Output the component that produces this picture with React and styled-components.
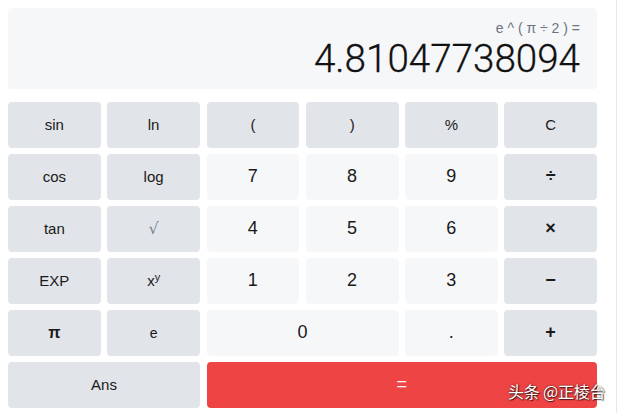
import styled, { createGlobalStyle } from "styled-components";

const GlobalStyle = createGlobalStyle`
  html, body {
    margin: 0;
    padding: 0;
    background: #fff;
  }
  body {
    font-family: "Liberation Sans", Arial, sans-serif;
  }
`;

const Page = styled.div`
  display: flex;
  width: 621px;
  height: 413px;
  position: relative;
  overflow: hidden;
`;
const Main = styled.div`
  width: 616px;
  padding: 8px 0 0 8px;
  box-sizing: border-box;
`;
const Rail = styled.div`
  flex: 1;
  border-left: 1px solid #e8e9eb;
`;
const Display = styled.div`
  width: 589px;
  height: 81px;
  box-sizing: border-box;
  background: #f6f7f9;
  border-radius: 4px;
  padding: 12px 17px 0 0;
  display: flex;
  flex-direction: column;
  align-items: flex-end;
`;
const Expr = styled.div`
  font-size: 14px;
  color: #6b7280;
  line-height: 16px;
  height: 16px;
`;
const Result = styled.div`
  font-family: Roboto, "Liberation Sans", sans-serif;
  font-size: 38.6px;
  font-weight: 300;
  -webkit-text-stroke: 0.3px #111;
  line-height: 44px;
  color: #111;
  margin-top: 1px;
`;
const Pad = styled.div`
  margin-top: 13px;
  width: 589px;
  display: grid;
  grid-template-columns: repeat(6, 1fr);
  grid-auto-rows: 45.5px;
  gap: 6.5px;
`;
const Key = styled.div`
  grid-column: span ${(p) => p.$span || 1};
  border-radius: 4px;
  display: flex;
  align-items: center;
  justify-content: center;
  background: ${(p) =>
    p.$kind === "num" ? "#f6f7f9" : p.$kind === "eq" ? "#ef4444" : "#e1e4e8"};
  color: ${(p) => (p.$kind === "eq" ? "#fff" : "#1a1a1a")};
  font-size: ${(p) => p.$size || 15}px;
  font-weight: ${(p) => (p.$bold ? 700 : 400)};
`;
const Root = styled.span`
  color: #7a7f95;
  font-family: "DejaVu Serif", serif;
  font-weight: 200;
  font-size: 16px;
`;
const Sup = styled.sup`
  font-size: 11px;
  vertical-align: 5px;
  line-height: 0;
`;
const Watermark = styled.div`
  position: absolute;
  left: 508px;
  top: 379px;
  font-family: "Noto Sans CJK SC", sans-serif;
  font-size: 16px;
  color: #fff;
  letter-spacing: -0.2px;
  text-shadow: 0 0 2px rgba(0, 0, 0, 0.75), 1px 1px 1px rgba(0, 0, 0, 0.6);
`;

// [label, kind, span, size]
const keys = [
  ["sin"], ["ln"], ["("], [")"], ["%"], ["C"],
  ["cos"], ["log"], ["7", "num"], ["8", "num"], ["9", "num"], ["÷", "op"],
  ["tan"], ["root"], ["4", "num"], ["5", "num"], ["6", "num"], ["×", "op"],
  ["EXP"], ["pow"], ["1", "num"], ["2", "num"], ["3", "num"], ["−", "op"],
  ["π", "op", 1, 16], ["e", "fn", 1, 14], ["0", "num", 2], [".", "num"], ["+", "op"],
  ["Ans", "fn", 2], ["=", "eq", 4],
];

function label(k) {
  if (k === "root") return <Root>√</Root>;
  if (k === "pow")
    return (
      <span>
        x<Sup>y</Sup>
      </span>
    );
  return k;
}

export default function App() {
  return (
    <Page>
      <GlobalStyle />
      <Main>
        <Display>
          <Expr>e ^ ( π ÷ 2 ) =</Expr>
          <Result>4.81047738094</Result>
        </Display>
        <Pad>
          {keys.map(([k, kind, span, size], i) => (
            <Key
              key={i}
              $kind={kind === "op" ? "fn" : kind}
              $bold={kind === "op"}
              $span={span}
              $size={size || (kind === "num" || kind === "op" || kind === "eq" ? 18 : 15)}
            >
              {label(k)}
            </Key>
          ))}
        </Pad>
      </Main>
      <Rail />
      <Watermark>头条 @正棱台</Watermark>
    </Page>
  );
}
